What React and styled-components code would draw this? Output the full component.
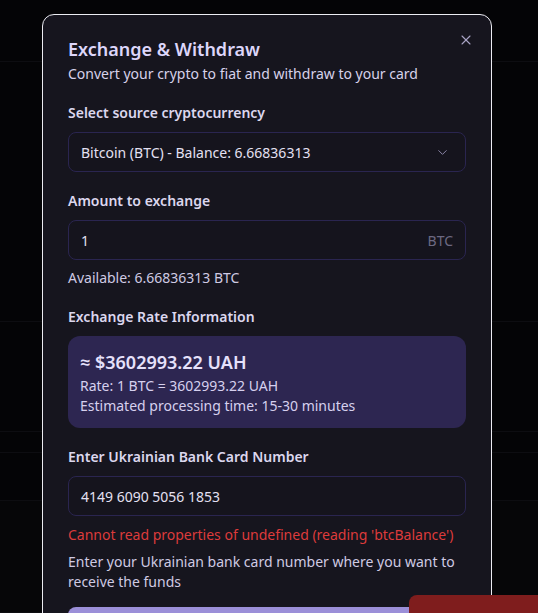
import React from 'react';
import styled, { createGlobalStyle } from 'styled-components';
import { X, ChevronDown } from 'lucide-react';

const Global = createGlobalStyle`
  html, body {
    margin: 0;
    padding: 0;
    background: #040406;
    font-family: "Segoe UI", "Noto Sans", "Open Sans", sans-serif;
  }
  * { box-sizing: border-box; }
`;

const Page = styled.div`
  height: 613px;
  overflow: hidden;
  display: flex;
  flex-direction: column;
`;

const Band = styled.div`
  height: ${p => p.h}px;
  flex: ${p => (p.h ? 'none' : 1)};
  border-bottom: 1px solid #0d0d11;
  background: ${p => p.bg || 'transparent'};
`;

const Dialog = styled.div`
  position: fixed;
  top: 14px;
  left: 42px;
  width: 450px;
  height: 640px;
  background: #16151e;
  border: 1px solid #ececf2;
  border-radius: 12px;
  padding: 23px 25px 24px;
  display: flex;
  flex-direction: column;
  color: #ddd7f3;
`;

const Close = styled.button`
  position: absolute;
  top: 17px;
  right: 17px;
  background: none;
  border: 0;
  padding: 0;
  color: #a9a4c6;
  display: flex;
`;

const Title = styled.h2`
  margin: 0;
  font-size: 18px;
  line-height: 22px;
  font-weight: 600;
  color: #ddd6fa;
`;

const Subtitle = styled.p`
  margin: 4px 0 0;
  font-size: 14px;
  line-height: 20px;
  color: #d6d1ea;
`;

const Field = styled.div`
  margin-top: ${p => p.top || 19}px;
  display: flex;
  flex-direction: column;
`;

const Label = styled.label`
  font-size: 14px;
  line-height: 20px;
  font-weight: 600;
  color: #dcd7ee;
  margin-bottom: 9px;
`;

const Box = styled.div`
  height: 40px;
  border: 1px solid #2a2550;
  border-radius: 8px;
  background: #15141d;
  padding: 0 12px;
  display: flex;
  align-items: center;
  justify-content: space-between;
  font-size: 14px;
  color: #e4e0f2;
`;

const Chevron = styled(ChevronDown)`
  color: #8a85a6;
  margin-right: 3px;
`;

const Unit = styled.span`
  color: #6c6982;
  font-size: 14px;
`;

const Note = styled.p`
  margin: ${p => p.top || 8}px 0 0;
  font-size: 14px;
  line-height: 20px;
  color: ${p => (p.error ? '#dd3b3b' : '#cfcae3')};
`;

const RateCard = styled.div`
  background: #2d2651;
  border-radius: 12px;
  padding: 13px 12px 12px;
  display: flex;
  flex-direction: column;
`;

const RateTotal = styled.div`
  font-size: 18px;
  line-height: 26px;
  font-weight: 600;
  color: #e6e1fb;
  margin-bottom: 1px;
`;

const RateLine = styled.div`
  font-size: 14px;
  line-height: 20px;
  color: #d6d0ee;
`;

const Submit = styled.button`
  margin-top: 15px;
  height: 40px;
  border: 0;
  border-radius: 8px;
  background: #9b8fd8;
  flex: none;
`;

const Toast = styled.div`
  position: fixed;
  left: 409px;
  top: 595px;
  width: 200px;
  height: 80px;
  background: #7f1d1d;
  border-radius: 8px;
`;

export default function App() {
  return (
    <>
      <Global />
      <Page>
        <Band h={62} />
        <Band h={260} />
        <Band h={110} />
        <Band h={21} />
        <Band h={48} />
        <Band bg="#060608" />
      </Page>
      <Dialog>
        <Close aria-label="Close">
          <X size={16} strokeWidth={1.6} />
        </Close>
        <Title>Exchange &amp; Withdraw</Title>
        <Subtitle>Convert your crypto to fiat and withdraw to your card</Subtitle>

        <Field top={19}>
          <Label>Select source cryptocurrency</Label>
          <Box>
            <span>Bitcoin (BTC) - Balance: 6.66836313</span>
            <Chevron size={15} strokeWidth={1.6} />
          </Box>
        </Field>

        <Field>
          <Label>Amount to exchange</Label>
          <Box>
            <span>1</span>
            <Unit>BTC</Unit>
          </Box>
          <Note>Available: 6.66836313 BTC</Note>
        </Field>

        <Field>
          <Label>Exchange Rate Information</Label>
          <RateCard>
            <RateTotal>≈ $3602993.22 UAH</RateTotal>
            <RateLine>Rate: 1 BTC = 3602993.22 UAH</RateLine>
            <RateLine>Estimated processing time: 15-30 minutes</RateLine>
          </RateCard>
        </Field>

        <Field>
          <Label>Enter Ukrainian Bank Card Number</Label>
          <Box>
            <span>4149 6090 5056 1853</span>
          </Box>
          <Note error top={9}>Cannot read properties of undefined (reading 'btcBalance')</Note>
          <Note top={7}>Enter your Ukrainian bank card number where you want to receive the funds</Note>
        </Field>

        <Submit />
      </Dialog>
      <Toast />
    </>
  );
}
